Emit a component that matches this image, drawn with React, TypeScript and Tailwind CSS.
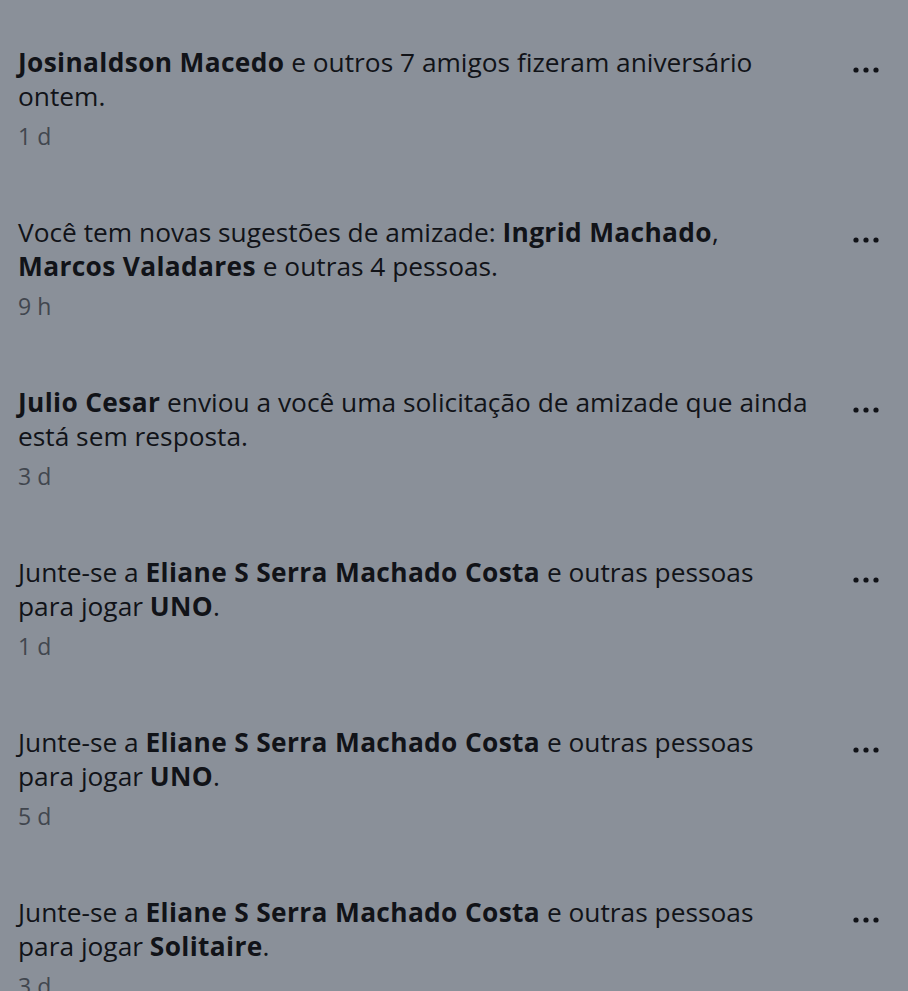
import React from "react";

type Part = { text: string; bold?: boolean };

type Item = {
  lines: Part[][];
  time: string;
};

const items: Item[] = [
  {
    lines: [
      [
        { text: "Josinaldson Macedo", bold: true },
        { text: " e outros 7 amigos fizeram aniversário" },
      ],
      [{ text: "ontem." }],
    ],
    time: "1 d",
  },
  {
    lines: [
      [
        { text: "Você tem novas sugestões de amizade: " },
        { text: "Ingrid Machado", bold: true },
        { text: "," },
      ],
      [
        { text: "Marcos Valadares", bold: true },
        { text: " e outras 4 pessoas." },
      ],
    ],
    time: "9 h",
  },
  {
    lines: [
      [
        { text: "Julio Cesar", bold: true },
        { text: " enviou a você uma solicitação de amizade que ainda" },
      ],
      [{ text: "está sem resposta." }],
    ],
    time: "3 d",
  },
  {
    lines: [
      [
        { text: "Junte-se a " },
        { text: "Eliane S Serra Machado Costa", bold: true },
        { text: " e outras pessoas" },
      ],
      [{ text: "para jogar " }, { text: "UNO", bold: true }, { text: "." }],
    ],
    time: "1 d",
  },
  {
    lines: [
      [
        { text: "Junte-se a " },
        { text: "Eliane S Serra Machado Costa", bold: true },
        { text: " e outras pessoas" },
      ],
      [{ text: "para jogar " }, { text: "UNO", bold: true }, { text: "." }],
    ],
    time: "5 d",
  },
  {
    lines: [
      [
        { text: "Junte-se a " },
        { text: "Eliane S Serra Machado Costa", bold: true },
        { text: " e outras pessoas" },
      ],
      [
        { text: "para jogar " },
        { text: "Solitaire", bold: true },
        { text: "." },
      ],
    ],
    time: "3 d",
  },
];

function MoreDots() {
  return (
    <svg width="26" height="6" viewBox="0 0 26 6" className="fill-[#101217]">
      <circle cx="3" cy="3" r="2.6" />
      <circle cx="13" cy="3" r="2.6" />
      <circle cx="23" cy="3" r="2.6" />
    </svg>
  );
}

export default function App() {
  return (
    <div
      className="h-[991px] w-[908px] overflow-hidden bg-[#8a9099] pt-[45px]"
      style={{ fontFamily: '"Open Sans", "Noto Sans", sans-serif' }}
    >
      <ul className="flex flex-col gap-[60px]">
        {items.map((item, i) => (
          <li key={i} className="flex items-start pl-[18px] pr-[29px]">
            <div className="min-w-0 flex-1">
              {item.lines.map((line, k) => (
                <p
                  key={k}
                  className="whitespace-nowrap text-[26.3px] leading-[34px] text-[#111318]"
                >
                  {line.map((p, j) =>
                    p.bold ? (
                      <span key={j} className="font-bold tracking-[0.35px]">
                        {p.text}
                      </span>
                    ) : (
                      <span key={j}>{p.text}</span>
                    ),
                  )}
                </p>
              ))}
              <p className="mt-1 text-[23px] leading-[38px] text-[#41464e]">
                {item.time}
              </p>
            </div>
            <div className="pt-[22px]">
              <MoreDots />
            </div>
          </li>
        ))}
      </ul>
    </div>
  );
}
